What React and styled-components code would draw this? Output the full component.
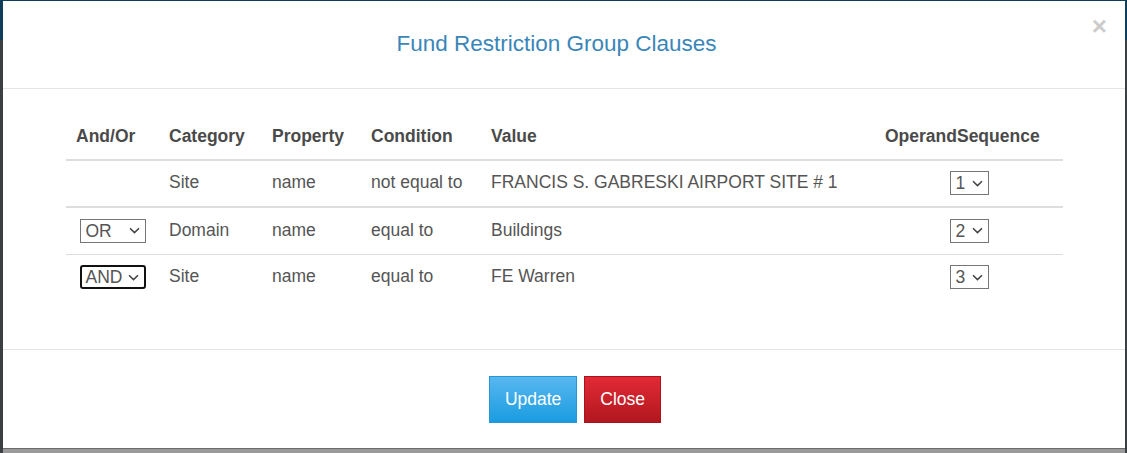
import styled, { createGlobalStyle } from "styled-components";

const GlobalStyle = createGlobalStyle`
  html, body {
    margin: 0;
    padding: 0;
  }
  body {
    background: linear-gradient(180deg, #0f3d5a 0, #0f3d5a 40px, #3b3f42 40px);
    font-family: "Liberation Sans", Arial, sans-serif;
    height: 453px;
    overflow: hidden;
  }
`;

const Backdrop = styled.div`
  padding: 1px 2px 0 3px;
  height: 453px;
  box-sizing: border-box;
`;

const Modal = styled.div`
  position: relative;
  background: #fff;
  height: 447px;
  display: flex;
  flex-direction: column;
  box-shadow: 0 1px 0 #6a6a6a, 0 6px 0 #9a9a9a;
`;

const Header = styled.div`
  height: 87px;
  border-bottom: 1px solid #e5e5e5;
  display: flex;
  align-items: center;
  justify-content: center;
  padding-right: 15px;
`;

const Title = styled.h4`
  margin: 0;
  font-size: 22.5px;
  font-weight: 400;
  color: #3a86b8;
  line-height: 1.1;
`;

const CloseX = styled.button`
  position: absolute;
  top: 12px;
  right: 18px;
  border: 0;
  background: none;
  padding: 0;
  font-family: "Liberation Sans", Arial, sans-serif;
  font-size: 26px;
  font-weight: 700;
  line-height: 1;
  color: #cccccc;
  cursor: pointer;
`;

const Body = styled.div`
  padding: 25px 62px 25px 63px;
  border-bottom: 1px solid #e5e5e5;
`;

const Table = styled.table`
  width: 997px;
  margin-bottom: 24px;
  border-collapse: collapse;
  table-layout: fixed;
  font-size: 17.5px;
  line-height: 25px;
  color: #555;
`;

const HeadCell = styled.th`
  box-sizing: border-box;
  width: ${p => p.$w}px;
  text-align: left;
  font-weight: 700;
  color: #4a4a4a;
  padding: 10px;
  border-bottom: 2px solid #dddddd;
  white-space: nowrap;
`;

const Row = styled.tr`
  border-bottom: ${p => p.$line}px solid #dddddd;
`;

const Cell = styled.td`
  padding: 9px 10px 11px;
  vertical-align: middle;
  text-align: ${p => (p.$center ? "center" : "left")};
  white-space: nowrap;
`;

const SelectBox = styled.span`
  display: inline-flex;
  align-items: center;
  justify-content: space-between;
  box-sizing: border-box;
  width: ${p => p.$w}px;
  height: 24px;
  padding: 0 5px 0 ${p => (p.$focused ? 4 : 5)}px;
  border: ${p => (p.$focused ? "2px solid #111" : "1px solid #767676")};
  border-radius: ${p => (p.$focused ? 3 : 0)}px;
  background: #fff;
  font-size: 17.5px;
  line-height: 22px;
  color: #555;
  vertical-align: middle;
  text-align: left;
`;

const Chevron = () => (
  <svg width="11" height="7" viewBox="0 0 11 7" fill="none">
    <path d="M1 1.2 L5.5 5.6 L10 1.2" stroke="#444" strokeWidth="1.5" />
  </svg>
);

const Select = ({ value, width, focused }) => (
  <SelectBox $w={width} $focused={focused}>
    <span>{value}</span>
    <Chevron />
  </SelectBox>
);

const Footer = styled.div`
  flex: 1;
  display: flex;
  justify-content: center;
  align-items: flex-start;
  gap: 7px;
  padding: 26px 0 0 22px;
`;

const Button = styled.button`
  height: 47px;
  padding: 0 15px;
  font-family: "Liberation Sans", Arial, sans-serif;
  font-size: 17.5px;
  color: #fff;
  border: 1px solid ${p => (p.$variant === "danger" ? "#a9141c" : "#2596d6")};
  border-radius: 0;
  background: ${p =>
    p.$variant === "danger"
      ? "linear-gradient(180deg, #e22a36 0%, #b2171f 100%)"
      : "linear-gradient(180deg, #58b7ef 0%, #1a9ce0 100%)"};
  cursor: pointer;
`;

const columns = [
  { label: "And/Or", w: 93 },
  { label: "Category", w: 103 },
  { label: "Property", w: 99 },
  { label: "Condition", w: 120 },
  { label: "Value", w: 394 },
  { label: "OperandSequence", w: 188 }
];

const clauses = [
  { andOr: null, category: "Site", property: "name", condition: "not equal to", value: "FRANCIS S. GABRESKI AIRPORT SITE # 1", seq: "1", line: 2 },
  { andOr: "OR", category: "Domain", property: "name", condition: "equal to", value: "Buildings", seq: "2", line: 1 },
  { andOr: "AND", category: "Site", property: "name", condition: "equal to", value: "FE Warren", seq: "3", line: 0, focused: true }
];

export default function App() {
  return (
    <>
      <GlobalStyle />
      <Backdrop>
        <Modal>
          <Header>
            <Title>Fund Restriction Group Clauses</Title>
            <CloseX>×</CloseX>
          </Header>
          <Body>
            <Table>
              <thead>
                <tr>
                  {columns.map(c => (
                    <HeadCell key={c.label} $w={c.w}>{c.label}</HeadCell>
                  ))}
                </tr>
              </thead>
              <tbody>
                {clauses.map(c => (
                  <Row key={c.seq} $line={c.line}>
                    <Cell $center>
                      {c.andOr && <Select value={c.andOr} width={66} focused={c.focused} />}
                    </Cell>
                    <Cell>{c.category}</Cell>
                    <Cell>{c.property}</Cell>
                    <Cell>{c.condition}</Cell>
                    <Cell>{c.value}</Cell>
                    <Cell $center>
                      <Select value={c.seq} width={39} />
                    </Cell>
                  </Row>
                ))}
              </tbody>
            </Table>
          </Body>
          <Footer>
            <Button>Update</Button>
            <Button $variant="danger">Close</Button>
          </Footer>
        </Modal>
      </Backdrop>
    </>
  );
}
